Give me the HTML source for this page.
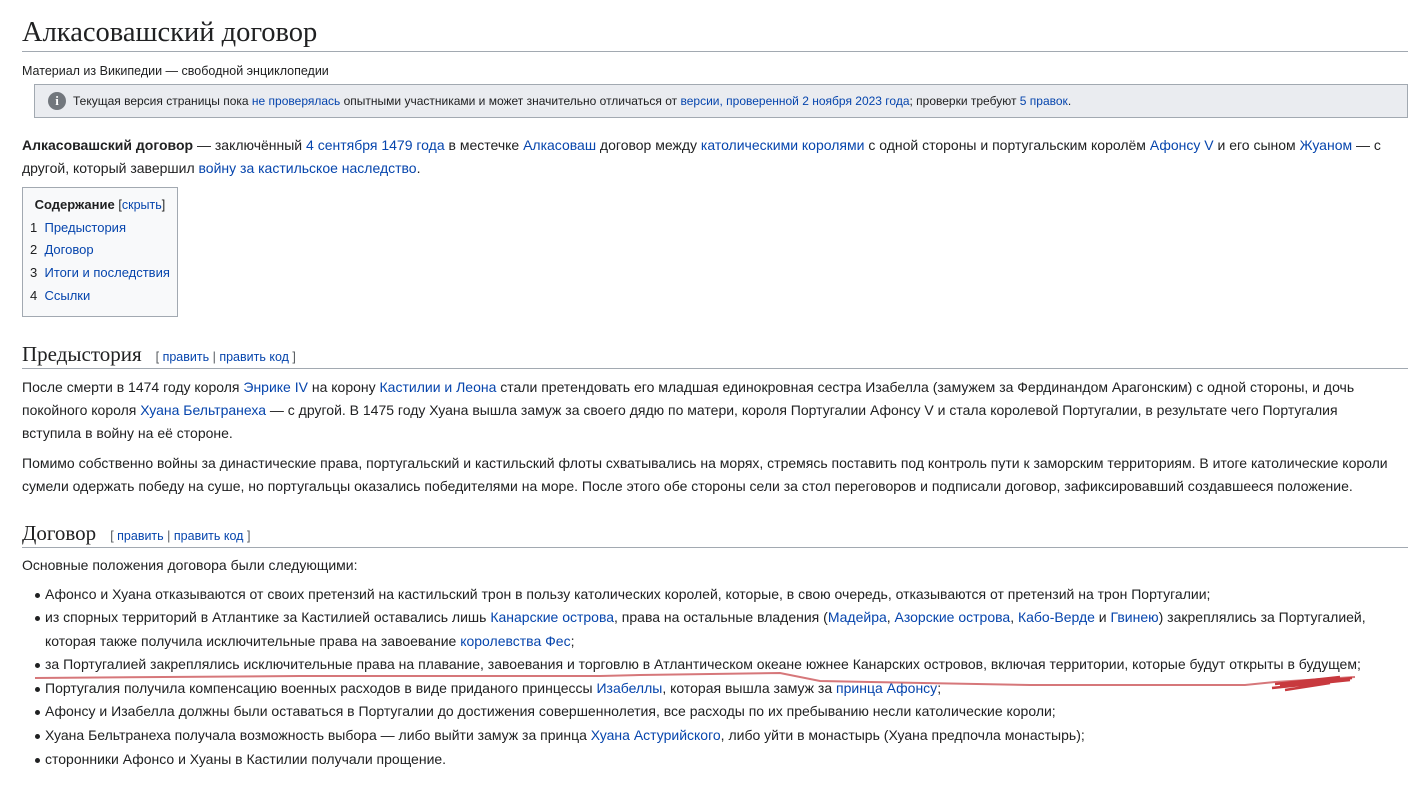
<!DOCTYPE html>
<html><head><meta charset="utf-8"><style>
body{margin:0;background:#fff;font-family:"Liberation Sans",Arial,sans-serif;font-size:14px;color:#202122;width:1408px;overflow:hidden}
a{color:#0645ad;text-decoration:none}
.w{padding-left:22px}
h1{font-family:"Liberation Serif",serif;font-weight:normal;font-size:28.5px;margin:0;padding-top:14px;height:37px;border-bottom:1px solid #a2a9b1;line-height:37px}
.sub{font-size:12.5px;margin-top:11px;line-height:16px}
.notice{margin:5px 0 0 12px;background:#eaecf0;border:1px solid #a2a9b1;height:32px;font-size:12px;display:flex;align-items:center}
.ic{width:18px;height:18px;border-radius:50%;background:#72777d;color:#fff;font-weight:bold;font-size:13px;text-align:center;line-height:18px;margin:0 7px 0 13px;font-family:"Liberation Serif",serif}
p{margin:0;line-height:23px;max-width:1368px}
.toc{margin-top:7px;border:1px solid #a2a9b1;background:#f8f9fa;display:inline-block;padding:6px 7px 8px 7px;line-height:22.7px;white-space:nowrap;font-size:13px}
.toc span.s{font-size:12.5px}
h2{font-family:"Liberation Serif",serif;font-weight:normal;font-size:21px;margin:0;border-bottom:1px solid #a2a9b1;line-height:28px;height:28px}
h2 .e{font-family:"Liberation Sans",sans-serif;font-size:12.5px;margin-left:14px;color:#54595d}
ul{margin:6px 0 0 0;padding-left:23px;list-style:none}
li{line-height:23.6px;position:relative}
li:before{content:"";position:absolute;left:-10px;top:10px;width:5px;height:5px;border-radius:50%;background:#202122}
</style></head><body><div class="w">
<h1>Алкасовашский договор</h1>
<div class="sub">Материал из Википедии — свободной энциклопедии</div>
<div class="notice"><div class="ic">i</div>Текущая версия страницы пока&nbsp;<a>не проверялась</a>&nbsp;опытными участниками и может значительно отличаться от&nbsp;<a>версии, проверенной 2 ноября 2023 года</a>; проверки требуют&nbsp;<a>5 правок</a>.</div>
<p style="margin-top:16px"><b>Алкасовашский договор</b> — заключённый <a>4 сентября 1479 года</a> в местечке <a>Алкасоваш</a> договор между <a>католическими королями</a> с одной стороны и португальским королём <a>Афонсу V</a> и его сыном <a>Жуаном</a> — с другой, который завершил <a>войну за кастильское наследство</a>.</p>
<div class="toc"><div style="text-align:center;padding:0 4px"><b>Содержание</b> <span class="s">[<a>скрыть</a>]</span></div>
<div>1&nbsp; <a>Предыстория</a></div><div>2&nbsp; <a>Договор</a></div><div>3&nbsp; <a>Итоги и последствия</a></div><div>4&nbsp; <a>Ссылки</a></div></div>
<h2 style="margin-top:23px">Предыстория<span class="e">[ <a>править</a> | <a>править код</a> ]</span></h2>
<p style="margin-top:7px">После смерти в 1474 году короля <a>Энрике IV</a> на корону <a>Кастилии и Леона</a> стали претендовать его младшая единокровная сестра Изабелла (замужем за Фердинандом Арагонским) с одной стороны, и дочь покойного короля <a>Хуана Бельтранеха</a> — с другой. В 1475 году Хуана вышла замуж за своего дядю по матери, короля Португалии Афонсу V и стала королевой Португалии, в результате чего Португалия вступила в войну на её стороне.</p>
<p style="margin-top:7px">Помимо собственно войны за династические права, португальский и кастильский флоты схватывались на морях, стремясь поставить под контроль пути к заморским территориям. В итоге католические короли сумели одержать победу на суше, но португальцы оказались победителями на море. После этого обе стороны сели за стол переговоров и подписали договор, зафиксировавший создавшееся положение.</p>
<h2 style="margin-top:21px">Договор<span class="e">[ <a>править</a> | <a>править код</a> ]</span></h2>
<p style="margin-top:6px">Основные положения договора были следующими:</p>
<ul>
<li>Афонсо и Хуана отказываются от своих претензий на кастильский трон в пользу католических королей, которые, в свою очередь, отказываются от претензий на трон Португалии;</li>
<li>из спорных территорий в Атлантике за Кастилией оставались лишь <a>Канарские острова</a>, права на остальные владения (<a>Мадейра</a>, <a>Азорские острова</a>, <a>Кабо-Верде</a> и <a>Гвинею</a>) закреплялись за Португалией, которая также получила исключительные права на завоевание <a>королевства Фес</a>;</li>
<li>за Португалией закреплялись исключительные права на плавание, завоевания и торговлю в Атлантическом океане южнее Канарских островов, включая территории, которые будут открыты в будущем;</li>
<li>Португалия получила компенсацию военных расходов в виде приданого принцессы <a>Изабеллы</a>, которая вышла замуж за <a>принца Афонсу</a>;</li>
<li>Афонсу и Изабелла должны были оставаться в Португалии до достижения совершеннолетия, все расходы по их пребыванию несли католические короли;</li>
<li>Хуана Бельтранеха получала возможность выбора — либо выйти замуж за принца <a>Хуана Астурийского</a>, либо уйти в монастырь (Хуана предпочла монастырь);</li>
<li>сторонники Афонсо и Хуаны в Кастилии получали прощение.</li>
</ul></div>
<svg style="position:absolute;left:0;top:0" width="1408" height="789"><path d="M35 678 L300 676 L600 676 L640 675 L780 673 L820 681 L1030 685 L1245 685 L1275 682 L1355 677" fill="none" stroke="#c8494e" stroke-width="2" opacity=".75"/><path d="M1275 684 L1340 677 M1272 688 L1350 680 M1285 690 L1330 683 M1280 686 L1352 678" stroke="#c8393e" stroke-width="2.5" fill="none"/></svg>
</body></html>
